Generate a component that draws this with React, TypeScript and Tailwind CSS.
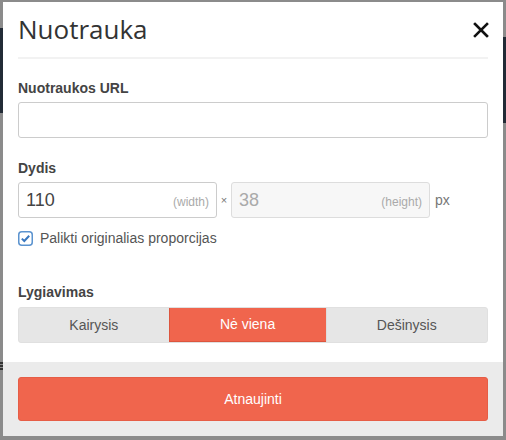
import React from "react";

export default function App() {
  const arial = { fontFamily: '"Liberation Sans", Arial, sans-serif' };
  return (
    <div className="relative w-[506px] h-[440px] overflow-hidden bg-[#8b8b8b]" style={arial}>
      {/* dimmed page behind */}
      <div className="absolute left-0 top-[28px] w-[3px] h-[85px] bg-[#222b36]" />
      <div className="absolute right-0 top-[37px] w-[3px] h-[86px] bg-[#222b36]" />
      <div className="absolute left-0 top-[362px] w-[3px] h-[9px] flex flex-col gap-[1px]">
        <div className="h-[2px] bg-[#333]" />
        <div className="h-[2px] bg-[#333]" />
        <div className="h-[2px] bg-[#333]" />
      </div>

      {/* modal */}
      <div className="absolute left-[3px] top-[2px] w-[500px] bg-white">
        <div className="px-[15px] pt-[9px]">
          <div className="flex items-start justify-between">
            <h1
              className="text-[26px] leading-[36px] text-[#333]"
              style={{ fontFamily: '"Open Sans", sans-serif' }}
            >
              Nuotrauka
            </h1>
            <svg width="16" height="16" viewBox="0 0 16 16" className="mt-[11px] mr-[-1px]">
              <path d="M2 2 L14 14 M14 2 L2 14" stroke="#111" strokeWidth="2.6" strokeLinecap="square" />
            </svg>
          </div>
          <div className="mt-[10px] h-[2px] bg-[#f2f2f2]" />

          <div className="mt-[19px] text-[14px] leading-[20px] font-bold text-[#444]">Nuotraukos URL</div>
          <div className="mt-[4px] h-[36px] rounded-[3px] border border-[#ccc] bg-white" />

          <div className="mt-[20px] text-[14px] leading-[20px] font-bold text-[#444]">Dydis</div>
          <div className="mt-[4px] flex items-center">
            <div className="flex items-center justify-between w-[199px] h-[36px] rounded-[3px] border border-[#ccc] bg-white pl-[7px] pr-[7px]">
              <span className="text-[18px] text-[#444]">110</span>
              <span className="text-[12px] text-[#aaa] mt-[3px]">(width)</span>
            </div>
            <span className="w-[14px] text-center text-[11px] text-[#777]">×</span>
            <div className="flex items-center justify-between w-[199px] h-[36px] rounded-[3px] border border-[#ddd] bg-[#f7f7f7] pl-[7px] pr-[7px]">
              <span className="text-[18px] text-[#aaa]">38</span>
              <span className="text-[12px] text-[#aaa] mt-[3px]">(height)</span>
            </div>
            <span className="ml-[5px] text-[14px] text-[#777]">px</span>
          </div>

          <div className="mt-[10px] flex items-center h-[20px]">
            <svg width="15" height="15" viewBox="0 0 15 15">
              <rect x="0.75" y="0.75" width="13.5" height="13.5" rx="3" fill="white" stroke="#5b93cf" strokeWidth="1.5" />
              <path d="M3.8 7.6 L6.3 10 L11.2 4.8" fill="none" stroke="#3a78bf" strokeWidth="2" />
            </svg>
            <span className="ml-[7px] text-[14px] text-[#555]">Palikti originalias proporcijas</span>
          </div>

          <div className="mt-[34px] text-[14px] leading-[20px] font-bold text-[#444]">Lygiavimas</div>
          <div className="mt-[5px] flex h-[36px] rounded-[3px] overflow-hidden border border-[#e0e0e0] bg-[#e6e6e6] text-[14px]">
            <div className="flex-auto flex items-center justify-center text-[#555]">Kairysis</div>
            <div className="flex-auto flex items-center justify-center bg-[#f0654d] border-l border-b border-[#dc553e] text-white">Nė viena</div>
            <div className="flex-auto flex items-center justify-center text-[#555] border-l border-[#ddd]">Dešinysis</div>
          </div>
          <div className="h-[19px]" />
        </div>

        <div className="bg-[#ebebeb] px-[15px] pt-[15px] pb-[15px]">
          <div className="h-[44px] rounded-[3px] bg-[#f0654d] border border-[#e65d46] flex items-center justify-center text-white text-[14px]">
            Atnaujinti
          </div>
        </div>
      </div>
    </div>
  );
}
